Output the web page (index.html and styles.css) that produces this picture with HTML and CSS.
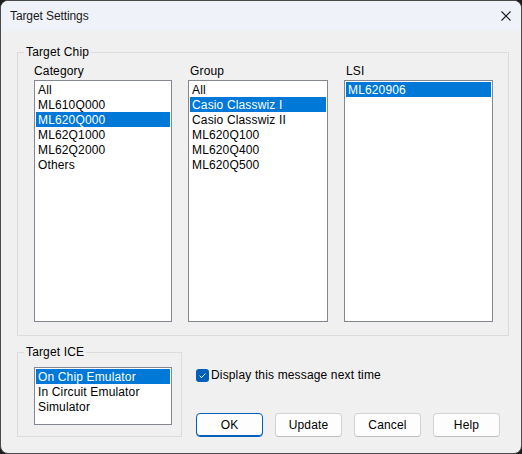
FILE: index.html
```html
<!DOCTYPE html>
<html>
<head>
<meta charset="utf-8">
<link rel="stylesheet" href="styles.css">
</head>
<body>
<div class="window">
  <div class="titlebar">
    <span class="title">Target Settings</span>
    <svg class="close" width="10" height="10" viewBox="0 0 10 10"><path d="M0.5 0.5L9.5 9.5M9.5 0.5L0.5 9.5" stroke="#1b1b1b" stroke-width="1.1" fill="none"/></svg>
  </div>
  <div class="content">
    <fieldset class="group chip">
      <legend>Target Chip</legend>
      <div class="cols">
        <div class="col cat">
          <div class="label">Category</div>
          <ul class="listbox">
            <li>All</li>
            <li>ML610Q000</li>
            <li class="sel">ML620Q000</li>
            <li>ML62Q1000</li>
            <li>ML62Q2000</li>
            <li>Others</li>
          </ul>
        </div>
        <div class="col grp">
          <div class="label shifted">Group</div>
          <ul class="listbox">
            <li>All</li>
            <li class="sel">Casio Classwiz I</li>
            <li>Casio Classwiz II</li>
            <li>ML620Q100</li>
            <li>ML620Q400</li>
            <li>ML620Q500</li>
          </ul>
        </div>
        <div class="col lsi">
          <div class="label shifted">LSI</div>
          <ul class="listbox">
            <li class="sel">ML620906</li>
          </ul>
        </div>
      </div>
    </fieldset>
    <div class="bottom">
      <fieldset class="group ice">
        <legend>Target ICE</legend>
        <ul class="listbox small">
          <li class="sel">On Chip Emulator</li>
          <li>In Circuit Emulator</li>
          <li>Simulator</li>
        </ul>
      </fieldset>
      <div class="right">
        <label class="check">
          <span class="box"><svg width="13" height="13" viewBox="0 0 13 13"><path d="M3.6 6.8L5.5 8.6L9.4 4.6" stroke="#fff" stroke-width="1" fill="none"/></svg></span>
          <span>Display this message next time</span>
        </label>
        <div class="buttons">
          <button class="btn ok">OK</button>
          <button class="btn">Update</button>
          <button class="btn">Cancel</button>
          <button class="btn">Help</button>
        </div>
      </div>
    </div>
  </div>
</div>
</body>
</html>
```
FILE: styles.css
```css
html, body {
  margin: 0;
  height: 100%;
}
body {
  background: #1c1c1c;
  font-family: "Liberation Sans", Arial, sans-serif;
  font-size: 12px;
  letter-spacing: 0.15px;
  color: #000;
}
.window {
  box-sizing: border-box;
  width: 522px;
  height: 454px;
  border: 1px solid #4a4a4a;
  border-radius: 8px;
  overflow: hidden;
  background: #f0f0f0;
  display: flex;
  flex-direction: column;
}
.titlebar {
  height: 30px;
  flex: none;
  display: flex;
  align-items: center;
  padding-left: 9px;
  background: #eff2f9;
}
.title {
  font-family: "Segoe UI", "Liberation Sans", Arial, sans-serif;
  font-size: 12px;
  color: #1a1a1a;
  letter-spacing: -0.1px;
}
.close {
  margin-left: auto;
  margin-right: 10px;
}
.content {
  padding: 14px 0 0 16px;
}
.group {
  margin: 0;
  border: 1px solid #dcdcdc;
  min-width: 0;
  box-sizing: border-box;
}
.group legend {
  padding: 0 2px;
  margin-left: -10px;
  line-height: 14px;
}
.chip {
  width: 492px;
  padding: 5px 0 13px 16px;
}
.cols {
  display: flex;
  gap: 16px;
}
.cat { width: 138px; }
.grp { width: 140px; }
.lsi { width: 149px; }
.label {
  line-height: 14px;
  margin-bottom: 2px;
}
.label.shifted {
  padding-left: 2px;
}
.listbox {
  list-style: none;
  margin: 0;
  padding: 1px;
  border: 1px solid #828790;
  background: #fff;
  height: 242px;
  box-sizing: border-box;
}
.listbox li {
  box-sizing: border-box;
  height: 15px;
  line-height: 15px;
  padding: 1px 0 0 2px;
  white-space: nowrap;
}
.listbox li.sel {
  background: #0078d7;
  color: #fff;
}
.bottom {
  display: flex;
  margin-top: 9px;
}
.ice {
  width: 165px;
  padding: 8px 0 11px 16px;
}
.listbox.small {
  width: 138px;
  height: 58px;
}
.right {
  margin-left: 14px;
  padding-top: 23px;
}
.check {
  display: flex;
  align-items: center;
  gap: 2px;
  line-height: 14px;
}
.box {
  width: 13px;
  height: 13px;
  border-radius: 3px;
  background: #005fb8;
  display: block;
}
.box svg {
  display: block;
}
.buttons {
  display: flex;
  gap: 12px;
  margin-top: 31px;
}
.btn {
  width: 67px;
  height: 24px;
  padding: 0;
  border: 1px solid #d3d3d3;
  border-bottom-color: #bdbdbd;
  border-radius: 4px;
  background: #fdfdfd;
  font-family: "Liberation Sans", Arial, sans-serif;
  font-size: 12px;
  letter-spacing: 0.15px;
  color: #000;
}
.btn.ok {
  border-color: #005fb8;
  box-shadow: inset 0 -1px 0 #005fb8;
}
```
